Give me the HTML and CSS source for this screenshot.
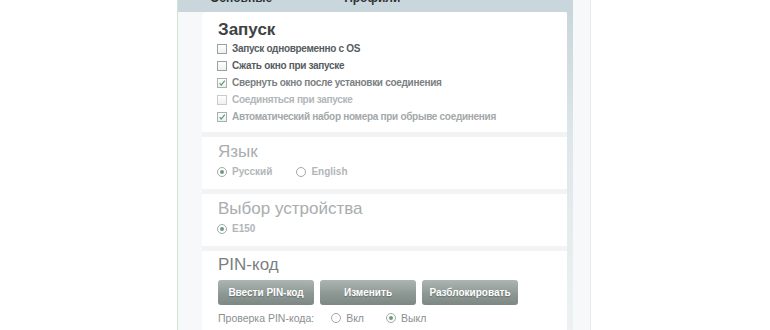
FILE: index.html
```html
<!DOCTYPE html>
<html lang="ru">
  <head>
    <meta charset="UTF-8" />
    <title>Настройки</title>
    <link rel="stylesheet" href="styles.css">
  </head>
  <body>
    <div class="window">
      <div class="main">
        <div class="tabs">
          <span class="tab tab-first">Основные</span>
          <span class="tab tab-second">Профили</span>
        </div>
        <div class="main-body">
          <div class="panel">
            <div class="section section-first">
              <h2 class="section-title title-bold">Запуск</h2>
              <label class="check-row row-dark">
                <span class="checkbox"></span>Запуск одновременно с OS
              </label>
              <label class="check-row row-dark">
                <span class="checkbox"></span>Сжать окно при запуске
              </label>
              <label class="check-row row-mid">
                <span class="checkbox checked">
                  <svg viewBox="0 0 10 10"><polyline points="2,5 4,7.5 8.5,2" /></svg>
                </span>Свернуть окно после установки соединения
              </label>
              <label class="check-row row-faint">
                <span class="checkbox faint"></span>Соединяться при запуске
              </label>
              <label class="check-row row-light">
                <span class="checkbox checked">
                  <svg viewBox="0 0 10 10"><polyline points="2,5 4,7.5 8.5,2" /></svg>
                </span>Автоматический набор номера при обрыве соединения
              </label>
            </div>

            <div class="section">
              <h2 class="section-title title-faint">Язык</h2>
              <div class="radio-row row-faint">
                <label class="radio-option"><span class="radio on"></span>Русский</label>
                <label class="radio-option"><span class="radio"></span>English</label>
              </div>
            </div>

            <div class="section">
              <h2 class="section-title title-faint">Выбор устройства</h2>
              <div class="radio-row row-faint">
                <label class="radio-option"><span class="radio on"></span>E150</label>
              </div>
            </div>

            <div class="section section-pin">
              <h2 class="section-title title-mid">PIN-код</h2>
              <div class="button-row">
                <button class="pin-button">Ввести PIN-код</button>
                <button class="pin-button">Изменить</button>
                <button class="pin-button">Разблокировать</button>
              </div>
              <div class="pin-check">
                <span class="pin-label">Проверка PIN-кода:</span>
                <label class="radio-option"><span class="radio"></span>Вкл</label>
                <label class="radio-option"><span class="radio on"></span>Выкл</label>
              </div>
            </div>
          </div>
          <div class="edge"></div>
        </div>
      </div>
    </div>
  </body>
</html>
```

FILE: styles.css
```css
* {
  margin: 0;
  padding: 0;
  box-sizing: border-box;
}

body {
  font-family: "Liberation Sans", Arial, sans-serif;
  background-color: #fff;
  height: 330px;
  overflow: hidden;
}

.window {
  margin-left: 177px;
  width: 414px;
  height: 330px;
  display: flex;
  background-color: #f6f8f9;
  border-left: 1px solid #d3e4d4;
  border-right: 1px solid #e6eaec;
}

.main {
  width: 395px;
  display: flex;
  flex-direction: column;
}

.tabs {
  height: 12px;
  flex-shrink: 0;
  background-color: #c9d6db;
  overflow: hidden;
  display: flex;
}

.tab {
  font-size: 12px;
  font-weight: bold;
  line-height: 12px;
  color: #2e3336;
  margin-top: -8px;
}

.tab-first {
  margin-left: 32px;
}

.tab-second {
  margin-left: 72px;
}

.main-body {
  flex: 1;
  display: flex;
  padding-left: 24px;
}

.panel {
  width: 365px;
  background-color: #f1f3f4;
}

.edge {
  width: 6px;
  background: linear-gradient(#c9d6db, #dfe7ea 40%, #eef2f3);
}

.section {
  background-color: #fff;
  padding: 5px 15px 9px;
  margin-bottom: 5px;
}

.section-first {
  padding-top: 8px;
  padding-bottom: 7px;
  border-radius: 4px 4px 0 0;
}

.section-pin {
  padding-top: 4px;
}

.section-title {
  font-size: 17px;
  line-height: 20px;
  font-weight: normal;
  margin-left: 1px;
}

.title-bold {
  font-weight: bold;
  color: #3e4346;
}

.title-faint {
  color: #a9adaf;
}

.title-mid {
  color: #7a7f81;
}

.check-row {
  display: flex;
  align-items: center;
  gap: 5px;
  height: 17px;
  font-size: 10px;
  letter-spacing: -0.3px;
  font-weight: bold;
}

.row-dark {
  color: #565c5f;
}

.row-mid {
  color: #7a8082;
}

.row-light {
  color: #a3a8aa;
}

.row-faint {
  color: #b2b6b8;
}

.checkbox {
  width: 10px;
  height: 10px;
  border: 1px solid #9aa1a3;
  background: linear-gradient(#fff, #eef0f0);
  display: flex;
}

.checkbox.faint {
  border-color: #c8cccd;
}

.checkbox.checked {
  border-color: #a9b0b1;
}

.checkbox svg {
  width: 8px;
  height: 8px;
}

.checkbox polyline {
  fill: none;
  stroke: #4f9a63;
  stroke-width: 1.4;
}

.radio-row {
  display: flex;
  gap: 24px;
  height: 17px;
  margin-top: 1px;
  align-items: center;
  font-size: 10px;
  font-weight: bold;
}

.radio-option {
  display: flex;
  align-items: center;
  gap: 5px;
}

.radio {
  width: 10px;
  height: 10px;
  border-radius: 50%;
  border: 1px solid #a3a9ab;
  display: flex;
  justify-content: center;
  align-items: center;
}

.radio.on::after {
  content: "";
  width: 4px;
  height: 4px;
  border-radius: 50%;
  background-color: #6e9d7c;
}

.button-row {
  display: flex;
  gap: 6px;
  margin-top: 5px;
  margin-left: 1px;
}

.pin-button {
  width: 96px;
  height: 25px;
  border: none;
  border-radius: 3px;
  background: linear-gradient(#adb5b2, #8d9895 55%, #7d8884);
  color: #fff;
  font-family: "Liberation Sans", Arial, sans-serif;
  font-size: 10px;
  font-weight: bold;
  text-shadow: 0 1px 1px rgba(0, 0, 0, 0.25);
}

.pin-check {
  display: flex;
  align-items: center;
  height: 16px;
  margin-top: 5px;
  margin-left: 1px;
  font-size: 10.5px;
  color: #8a8f91;
}

.pin-label {
  margin-right: 17px;
}

.pin-check .radio-option {
  margin-right: 22px;
}
```
